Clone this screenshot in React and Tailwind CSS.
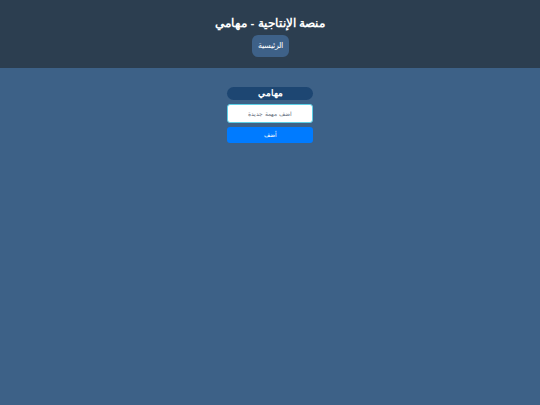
import React, { useState } from 'react';

export default function App() {
  const [task, setTask] = useState('');

  return (
    <div dir="rtl" className="min-h-[405px] bg-[#3d6187] text-white" style={{ fontFamily: '"Liberation Sans", Arial, sans-serif' }}>
      {/* Header */}
      <header className="h-[68px] bg-[#2c3e50] flex flex-col items-center pt-[16px]">
        <h1 className="text-[11.5px] font-bold leading-[15px]">منصة الإنتاجية - مهامي</h1>
        <button className="mt-[4px] h-[22px] px-[6px] rounded-[6px] bg-[#3e6188] text-[7.5px] text-white">
          الرئيسية
        </button>
      </header>

      {/* Tasks */}
      <main className="flex justify-center pt-[19px]">
        <div className="w-[86px] flex flex-col gap-[4px]">
          <h2 className="h-[13px] rounded-full bg-[#1d4672] text-[8.5px] font-bold leading-[13px] text-center">مهامي</h2>
          <input
            value={task}
            onChange={(e) => setTask(e.target.value)}
            placeholder="أضف مهمة جديدة"
            className="h-[19px] rounded-[3px] bg-white border border-[#5ccfe6] text-[5.5px] text-center text-gray-800 placeholder:text-gray-500 outline-none"
          />
          <button className="h-[16px] rounded-[3px] bg-[#007bff] text-[5.5px] text-white">أضف</button>
        </div>
      </main>
    </div>
  );
}
